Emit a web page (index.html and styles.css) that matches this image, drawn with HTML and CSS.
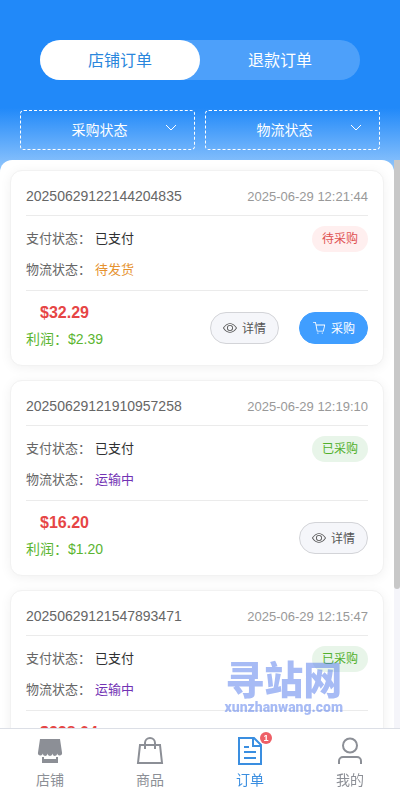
FILE: index.html
```html
<!DOCTYPE html>
<html lang="zh-CN">
<head>
<meta charset="utf-8">
<meta name="viewport" content="width=device-width, initial-scale=1">
<title>店铺订单</title>
<link rel="stylesheet" href="styles.css">
</head>
<body>
<svg class="sprite" aria-hidden="true">
  <symbol id="eye" viewBox="0 0 1024 1024"><path fill="currentColor" d="M512 160c320 0 512 352 512 352S832 864 512 864 0 512 0 512s192-352 512-352m0 64c-225.28 0-384.128 208.064-436.800 288 52.608 79.872 211.456 288 436.800 288 225.280 0 384.128-208.064 436.800-288-52.608-79.872-211.456-288-436.800-288m0 64a224 224 0 1 1 0 448 224 224 0 0 1 0-448m0 64a160.192 160.192 0 0 0-160 160c0 88.192 71.744 160 160 160s160-71.808 160-160-71.744-160-160-160"/></symbol>
  <symbol id="cart" viewBox="0 0 1024 1024"><path fill="currentColor" d="M432 928a48 48 0 1 1 0-96 48 48 0 0 1 0 96m320 0a48 48 0 1 1 0-96 48 48 0 0 1 0 96M96 128a32 32 0 0 1 0-64h160a32 32 0 0 1 31.360 25.728L320.640 256H928a32 32 0 0 1 31.296 38.720l-96 448A32 32 0 0 1 832 768H384a32 32 0 0 1-31.360-25.728L229.760 128zm314.240 576h395.904l82.304-384H333.440z"/></symbol>
</svg>
<div class="app">
  <header class="top">
    <nav class="switch">
      <button class="switch-item active" type="button">店铺订单</button>
      <button class="switch-item" type="button">退款订单</button>
    </nav>
    <div class="filters">
      <div class="filter">
        <select aria-label="采购状态"><option>采购状态</option></select>
        <svg class="chevron" viewBox="0 0 12 8" aria-hidden="true"><path d="M1 1l5 5 5-5"/></svg>
      </div>
      <div class="filter">
        <select aria-label="物流状态"><option>物流状态</option></select>
        <svg class="chevron" viewBox="0 0 12 8" aria-hidden="true"><path d="M1 1l5 5 5-5"/></svg>
      </div>
    </div>
  </header>

  <div class="content">
    <main class="list">
      <article class="card">
        <div class="card-head"><span class="number">20250629122144204835</span><time>2025-06-29 12:21:44</time></div>
        <div class="card-body">
          <div class="row"><span class="label">支付状态：</span><span class="value">已支付</span><span class="tag pending">待采购</span></div>
          <div class="row"><span class="label">物流状态：</span><span class="value waiting">待发货</span></div>
        </div>
        <div class="card-foot">
          <div class="money"><div class="price">$32.29</div><div class="profit">利润：$2.39</div></div>
          <div class="actions">
            <button class="btn" type="button"><svg><use href="#eye"/></svg>详情</button>
            <button class="btn primary" type="button"><svg><use href="#cart"/></svg>采购</button>
          </div>
        </div>
      </article>
      <article class="card">
        <div class="card-head"><span class="number">20250629121910957258</span><time>2025-06-29 12:19:10</time></div>
        <div class="card-body">
          <div class="row"><span class="label">支付状态：</span><span class="value">已支付</span><span class="tag done">已采购</span></div>
          <div class="row"><span class="label">物流状态：</span><span class="value transit">运输中</span></div>
        </div>
        <div class="card-foot">
          <div class="money"><div class="price">$16.20</div><div class="profit">利润：$1.20</div></div>
          <div class="actions">
            <button class="btn" type="button"><svg><use href="#eye"/></svg>详情</button>
          </div>
        </div>
      </article>
      <article class="card">
        <div class="card-head"><span class="number">20250629121547893471</span><time>2025-06-29 12:15:47</time></div>
        <div class="card-body">
          <div class="row"><span class="label">支付状态：</span><span class="value">已支付</span><span class="tag done">已采购</span></div>
          <div class="row"><span class="label">物流状态：</span><span class="value transit">运输中</span></div>
        </div>
        <div class="card-foot">
          <div class="money"><div class="price">$238.04</div></div>
        </div>
      </article>
    </main>
    <div class="scrollbar" aria-hidden="true"><div class="thumb"></div></div>
    <div class="watermark"><div class="mark-name">寻站网</div><div class="mark-url">xunzhanwang.com</div></div>
  </div>

  <nav class="tabbar">
    <a class="tab" href="#shop">
      <svg viewBox="0 0 28 28" aria-hidden="true"><path fill="currentColor" d="M4 2h20l2 13.500a2.400 2.400 0 0 1-4.800 1 2.400 2.400 0 0 1-4.800 0 2.400 2.400 0 0 1-4.800 0 2.400 2.400 0 0 1-4.800 0 2.400 2.400 0 0 1-4.800-1zM6 20h2v2h12v-2h2v6H6z"/></svg>
      <span>店铺</span>
    </a>
    <a class="tab" href="#goods">
      <svg viewBox="0 0 28 28" aria-hidden="true"><path class="line" d="M4 8h20l2 18H2zM9 12V6a5 5 0 0 1 10 0v6"/></svg>
      <span>商品</span>
    </a>
    <a class="tab active" href="#orders">
      <svg viewBox="0 0 28 28" aria-hidden="true"><path class="line" d="M3 1h15L25 8v19H3zM17 2v7h8M8 10h5M8 15h12M8 21h12"/></svg>
      <span>订单</span>
      <b class="badge">1</b>
    </a>
    <a class="tab" href="#mine">
      <svg viewBox="0 0 28 28" aria-hidden="true"><circle class="line" cx="14" cy="8.500" r="7"/><path class="line" d="M3 27v-3a4 4 0 0 1 4-4h14a4 4 0 0 1 4 4v3"/></svg>
      <span>我的</span>
    </a>
  </nav>
</div>
</body>
</html>
```
FILE: styles.css
```css
* { box-sizing: border-box; }

body {
  margin: 0;
  font-family: "Liberation Sans", "Noto Sans CJK SC", sans-serif;
  font-size: 14px;
  color: #606266;
}

button, select { font: inherit; }

.sprite { display: none; }

.app {
  display: flex;
  flex-direction: column;
  height: 100vh;
  background: linear-gradient(#2189f9 108px, #8ac2fc 166px);
}

.top { padding: 40px 20px 10px; }

.switch {
  display: flex;
  margin: 0 20px;
  border-radius: 20px;
  background: rgba(255, 255, 255, 0.2);
}

.switch-item {
  flex: 1;
  height: 40px;
  padding: 0 0 2px;
  border: 0;
  border-radius: 20px;
  background: none;
  font-size: 16px;
  color: #fff;
}

.switch-item.active {
  background: #fff;
  color: #2a86dc;
}

.filters {
  display: flex;
  gap: 10px;
  margin-top: 30px;
}

.filter {
  position: relative;
  flex: 1;
  height: 40px;
  border: 1px dashed #fff;
  border-radius: 4px;
}

.filter select {
  width: 100%;
  height: 100%;
  padding: 0 16px 0 0;
  border: 0;
  background: none;
  appearance: none;
  text-align: center;
  text-align-last: center;
  color: #fff;
}

.chevron {
  position: absolute;
  top: 13px;
  right: 17px;
  width: 12px;
  height: 8px;
  fill: none;
  stroke: #fff;
}

.content {
  position: relative;
  display: flex;
  flex: 1;
  min-height: 0;
}

.list {
  display: flex;
  flex: 1;
  flex-direction: column;
  gap: 14px;
  padding: 10px;
  overflow-y: auto;
  scrollbar-width: none;
  border-radius: 12px 12px 0 0;
  background: #fff;
}

.scrollbar {
  width: 6px;
  background: #f5f5fa;
}

.thumb {
  height: 75.5%;
  border-radius: 0 0 3px 3px;
  background: #c8c8c8;
}

.card {
  flex: none;
  padding: 15px;
  border: 1px solid #f2f2f2;
  border-radius: 12px;
  background: #fff;
  box-shadow: 0 2px 12px rgba(0, 0, 0, 0.06);
}

.card-head {
  display: flex;
  justify-content: space-between;
  align-items: baseline;
  height: 30px;
  padding-bottom: 10px;
  border-bottom: 1px solid #ebebeb;
  line-height: 20px;
}

.number { color: #666; }

time {
  font-size: 13px;
  color: #999;
}

.card-body {
  display: flex;
  flex-direction: column;
  gap: 8px;
  padding: 10px 0;
  border-bottom: 1px solid #ebebeb;
}

.row {
  display: flex;
  align-items: center;
  font-size: 13px;
  line-height: 20px;
}

.label {
  margin-right: 4px;
  color: #666;
}

.value { color: #303133; }
.value.waiting { color: #e6922e; }
.value.transit { color: #7232b4; }

.tag {
  margin-left: auto;
  padding: 0 10px;
  border-radius: 13px;
  font-size: 12px;
  line-height: 26px;
}

.tag.pending { background: #ffefef; color: #e05252; }
.tag.done { background: #e8f5e9; color: #52b02c; }

.card-foot {
  display: flex;
  justify-content: space-between;
  align-items: center;
  padding-top: 11px;
}

.money {
  display: flex;
  flex-direction: column;
  gap: 4px;
  line-height: 22px;
}

.price {
  padding-left: 14px;
  font-size: 16px;
  font-weight: bold;
  color: #e64545;
}

.profit { color: #5bb531; }

.actions {
  display: flex;
  gap: 20px;
  padding-top: 4px;
}

.btn {
  display: flex;
  align-items: center;
  gap: 5px;
  height: 32px;
  padding: 0 12px 1px;
  border: 1px solid #d3d4d8;
  border-radius: 16px;
  background: #f5f6fa;
  font-size: 12px;
  color: #555;
}

.btn svg { width: 14px; height: 14px; }

.btn.primary {
  border-color: #409eff;
  background: #409eff;
  color: #fff;
}

.watermark {
  position: absolute;
  right: 57px;
  bottom: 12px;
  text-align: center;
  color: rgba(80, 120, 235, 0.5);
  pointer-events: none;
}

.mark-name {
  font-family: "Noto Sans CJK SC", sans-serif;
  font-size: 39px;
  font-weight: 900;
  line-height: 42px;
}

.mark-url {
  font-family: Roboto, sans-serif;
  font-size: 14px;
  font-weight: 900;
  line-height: 18px;
}

.tabbar {
  display: flex;
  height: 72px;
  border-top: 1px solid #dcdfe6;
  background: #fff;
}

.tab {
  position: relative;
  display: flex;
  flex: 1;
  flex-direction: column;
  align-items: center;
  gap: 5px;
  padding-top: 8px;
  line-height: 20px;
  text-decoration: none;
  color: #8c8f96;
}

.tab.active { color: #3a8ee0; }

.tab svg { width: 28px; height: 28px; }

.line {
  fill: none;
  stroke: currentColor;
  stroke-width: 2;
}

.badge {
  position: absolute;
  top: 3px;
  left: 50%;
  width: 12px;
  height: 12px;
  margin-left: 10px;
  border-radius: 50%;
  background: #ee5f66;
  font-size: 9px;
  line-height: 12px;
  text-align: center;
  color: #fff;
}
```
